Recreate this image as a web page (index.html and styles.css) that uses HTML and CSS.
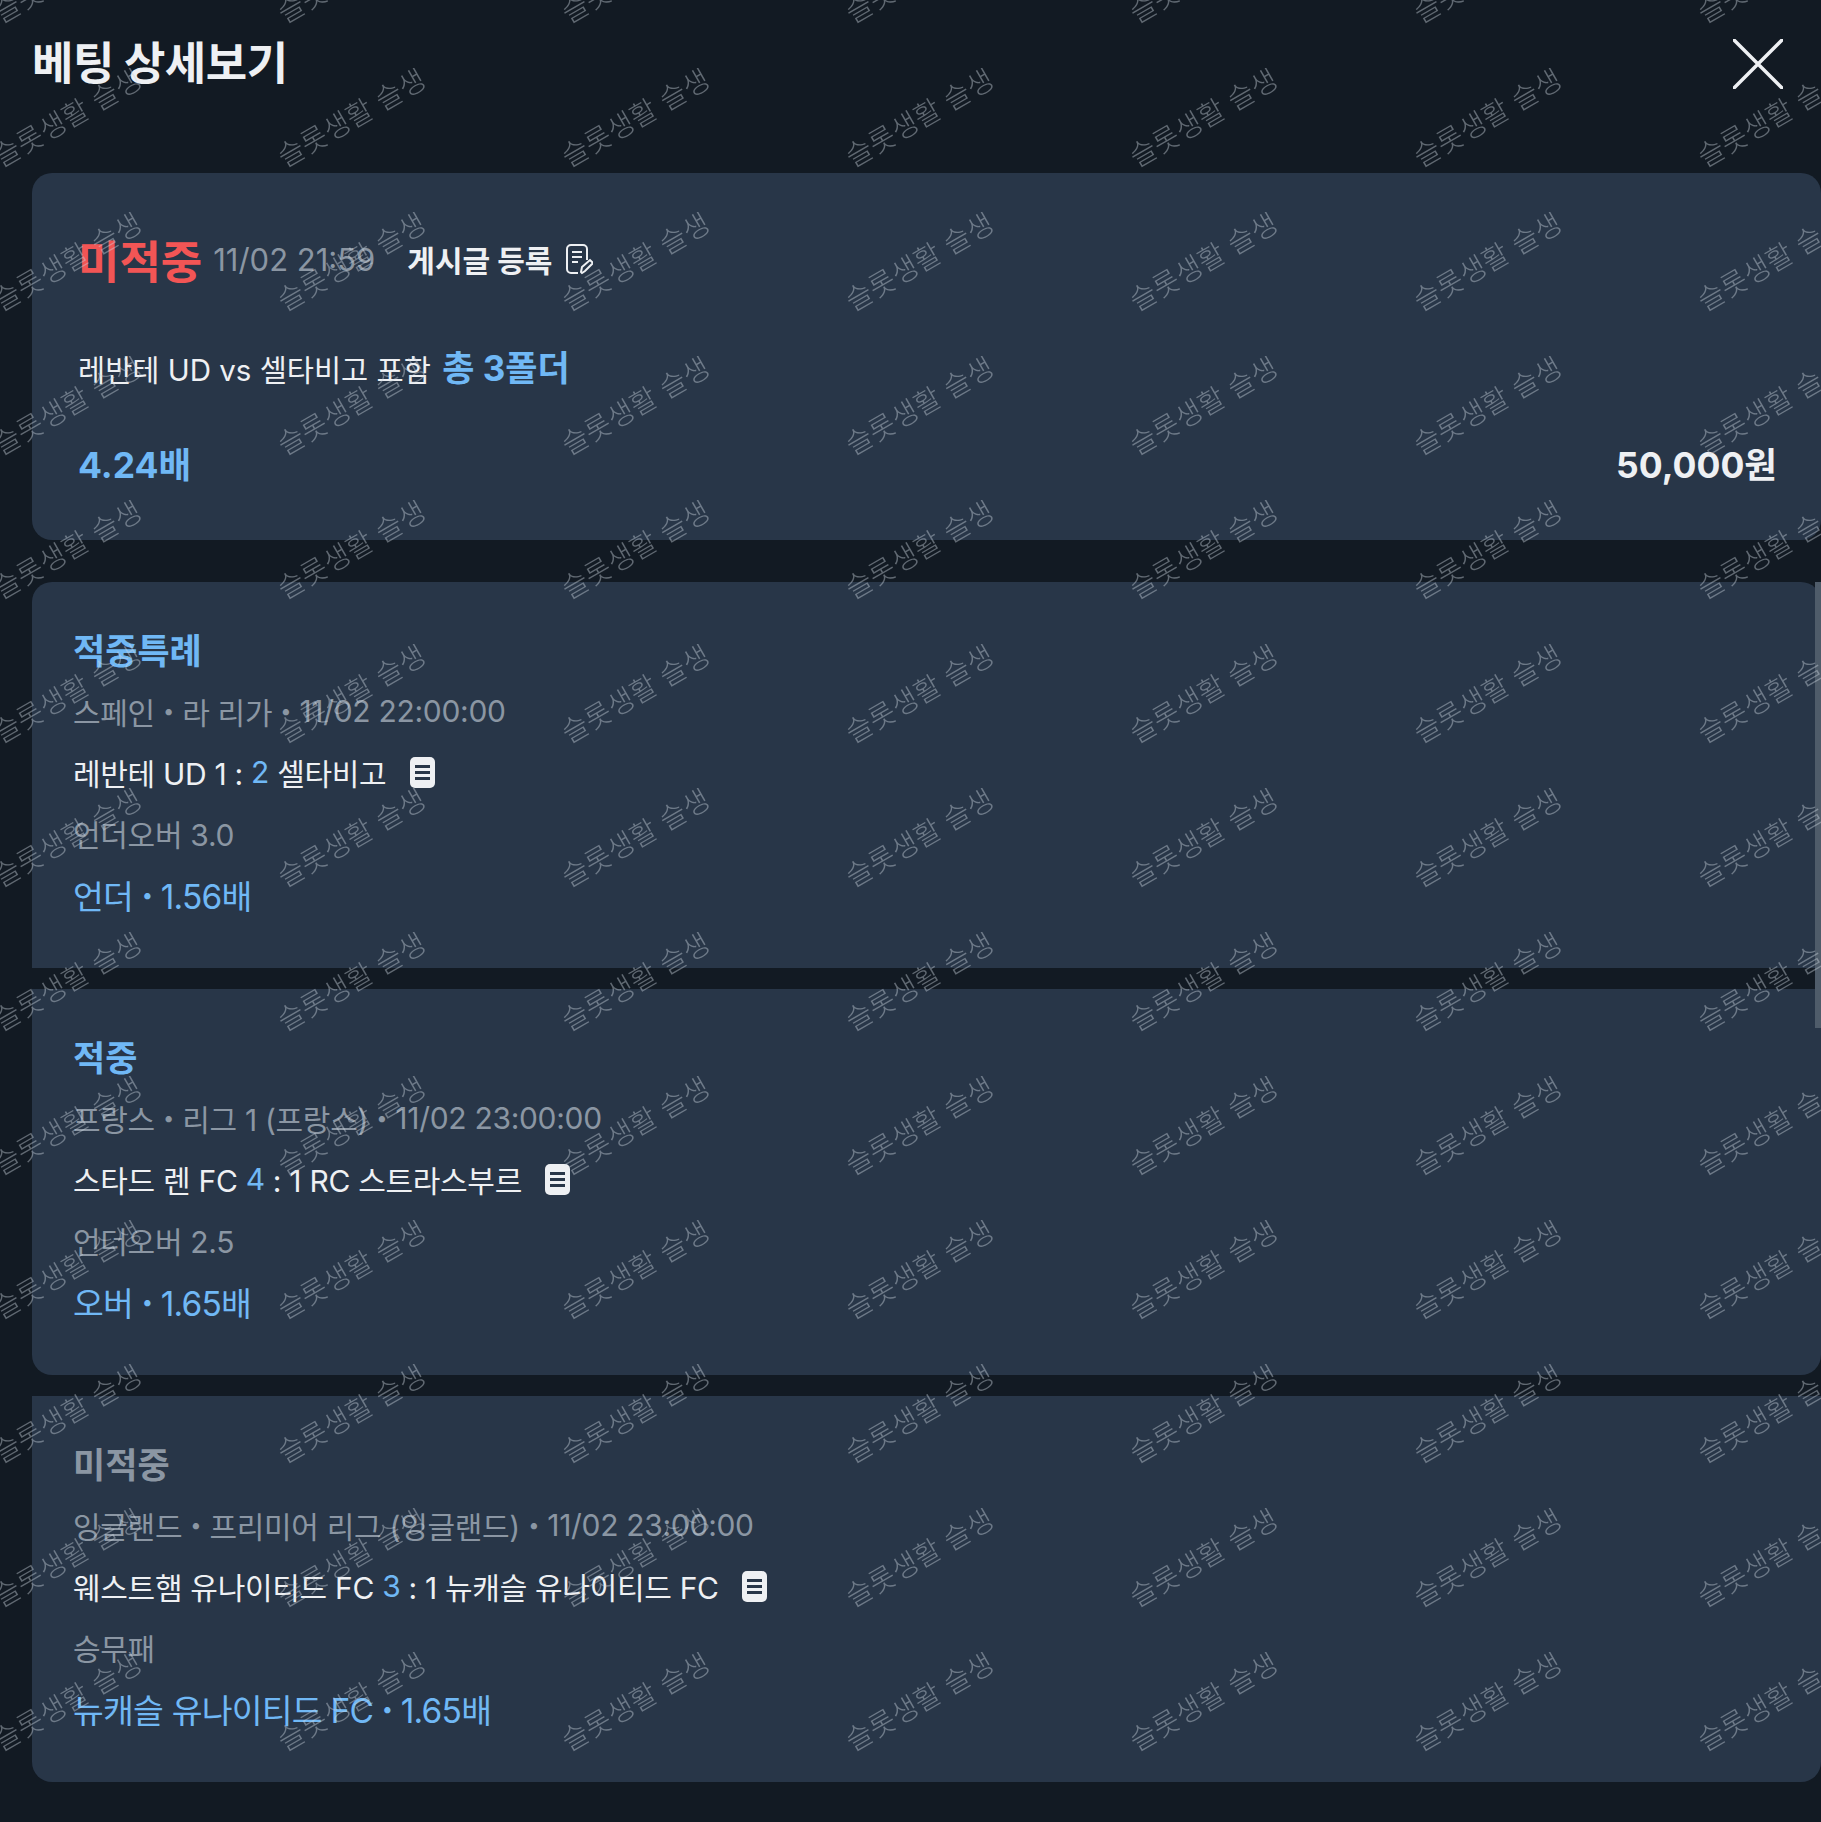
FILE: index.html
```html
<!DOCTYPE html>
<html lang="ko">
<head>
  <meta charset="UTF-8" />
  <title>베팅 상세보기</title>
  <link rel="stylesheet" href="styles.css">
</head>
<body>
  <div class="page">
    <header class="top">
      <h1>베팅 상세보기</h1>
      <svg class="close" viewBox="0 0 50 50"><path d="M1 1L49 49M49 1L1 49" /></svg>
    </header>

    <section class="summary">
      <div class="sum-head">
        <span class="miss">미적중</span>
        <span class="date">11/02 21:59</span>
        <span class="post">게시글 등록</span>
        <svg class="post-icon" viewBox="0 0 28 32">
          <path d="M13 30H6a4 4 0 0 1-4-4V6a4 4 0 0 1 4-4h12a4 4 0 0 1 4 4v11" />
          <path d="M7 9h10M7 14h10M7 19h6" />
          <path d="M17 30l-1 -1 1-5 8-7 3 3-8 8z" />
        </svg>
      </div>
      <div class="sum-match">레반테 UD vs 셀타비고 포함 <b>총 3폴더</b></div>
      <div class="sum-foot">
        <span class="rate">4.24배</span>
        <span class="stake">50,000원</span>
      </div>
    </section>

    <section class="card card-first">
      <div class="status hit">적중특례</div>
      <div class="row meta">스페인 <span class="dot">•</span> 라 리가 <span class="dot">•</span> 11/02 22:00:00</div>
      <div class="row score">레반테 UD 1 : <i>2</i> 셀타비고 <span class="doc"></span></div>
      <div class="row meta">언더오버 3.0</div>
      <div class="row pick">언더 <span class="dot">•</span> 1.56배</div>
    </section>

    <section class="card">
      <div class="status hit">적중</div>
      <div class="row meta">프랑스 <span class="dot">•</span> 리그 1 (프랑스) <span class="dot">•</span> 11/02 23:00:00</div>
      <div class="row score">스타드 렌 FC <i>4</i> : 1 RC 스트라스부르 <span class="doc"></span></div>
      <div class="row meta">언더오버 2.5</div>
      <div class="row pick">오버 <span class="dot">•</span> 1.65배</div>
    </section>

    <section class="card">
      <div class="status lost">미적중</div>
      <div class="row meta">잉글랜드 <span class="dot">•</span> 프리미어 리그 (잉글랜드) <span class="dot">•</span> 11/02 23:00:00</div>
      <div class="row score">웨스트햄 유나이티드 FC <i>3</i> : 1 뉴캐슬 유나이티드 FC <span class="doc"></span></div>
      <div class="row meta">승무패</div>
      <div class="row pick">뉴캐슬 유나이티드 FC <span class="dot">•</span> 1.65배</div>
    </section>

    <div class="scrollbar"></div>

    <!-- watermark repeated over the whole modal -->
    <svg class="watermark" width="1821" height="1790">
      <defs>
        <pattern id="wm" patternUnits="userSpaceOnUse" x="-5" y="-76" width="284" height="144">
          <text transform="translate(6 100) rotate(-30)">슬롯생활 슬생</text>
        </pattern>
      </defs>
      <rect width="1821" height="1790" fill="url(#wm)" />
    </svg>
  </div>
</body>
</html>
```

FILE: styles.css
```css
* {
  box-sizing: border-box;
}

body {
  margin: 0;
  background: #121a23;
  font-family: Inter, "Noto Sans CJK KR", sans-serif;
  color: #eef0f3;
}

.page {
  position: relative;
  width: 1821px;
  height: 1822px;
  overflow: hidden;
}

.top {
  display: flex;
  justify-content: space-between;
  align-items: center;
  height: 173px;
  padding: 0 38px 49px 32px;
}

.top h1 {
  margin: 0 0 4px;
  font-size: 45px;
  font-weight: 700;
  letter-spacing: -0.5px;
}

.close {
  width: 50px;
  height: 50px;
  margin-top: 4px;
}

.close path {
  stroke: #eef0f3;
  stroke-width: 3.5;
  stroke-linecap: round;
  fill: none;
}

.summary {
  height: 367px;
  margin-left: 32px;
  padding: 61px 44px 0 46px;
  background: #283648;
  border-radius: 20px;
}

.sum-head {
  display: flex;
  align-items: center;
  height: 50px;
}

.miss {
  font-size: 45px;
  font-weight: 700;
  color: #f25555;
}

.date {
  margin-left: 11px;
  font-size: 31px;
  color: #8b96a3;
}

.post {
  margin-left: 32px;
  font-size: 30px;
  font-weight: 700;
}

.post-icon {
  width: 28px;
  height: 32px;
  margin-left: 13px;
}

.post-icon path {
  fill: none;
  stroke: #eef0f3;
  stroke-width: 2;
}

.sum-match {
  margin-top: 59px;
  font-size: 29.5px;
  line-height: 50px;
}

.sum-match b {
  margin-left: 3px;
  font-size: 35px;
  color: #70b8f5;
}

.sum-foot {
  display: flex;
  justify-content: space-between;
  margin-top: 46px;
  font-size: 35.5px;
  font-weight: 700;
  line-height: 50px;
}

.rate {
  color: #70b8f5;
}

.card {
  height: 386px;
  margin: 21px 0 0 32px;
  padding: 41px 0 0 41px;
  background: #283648;
  border-radius: 0 0 20px 20px;
}

.card-first {
  margin-top: 42px;
  border-radius: 20px 20px 0 0;
}

.status {
  font-size: 35px;
  font-weight: 700;
  line-height: 57px;
}

.hit {
  color: #70b8f5;
}

.lost {
  color: #8b96a3;
}

.row {
  display: flex;
  align-items: center;
  height: 61.4px;
  font-size: 30px;
  letter-spacing: -0.3px;
  white-space: pre;
}

.meta {
  color: #8b96a3;
}

.dot {
  font-size: 20px;
}

.score i {
  font-style: normal;
  color: #70b8f5;
}

.pick {
  font-size: 33.5px;
  letter-spacing: -0.8px;
  color: #70b8f5;
}

.doc {
  width: 25px;
  height: 31px;
  margin-left: 15px;
  border-radius: 5px;
  background: linear-gradient(#283648, #283648) center 8px / 15px 3px no-repeat,
    linear-gradient(#283648, #283648) center 14px / 15px 3px no-repeat,
    linear-gradient(#283648, #283648) center 20px / 15px 3px no-repeat,
    #eef0f3;
}

.scrollbar {
  position: absolute;
  top: 582px;
  right: 0;
  width: 6px;
  height: 446px;
  background: #4f5c6a;
}

.watermark {
  position: absolute;
  top: 0;
  left: 0;
  pointer-events: none;
}

.watermark text {
  font-family: "Noto Sans CJK KR", sans-serif;
  font-size: 28.5px;
  font-weight: 300;
  fill: rgba(205, 215, 225, 0.42);
}
```
